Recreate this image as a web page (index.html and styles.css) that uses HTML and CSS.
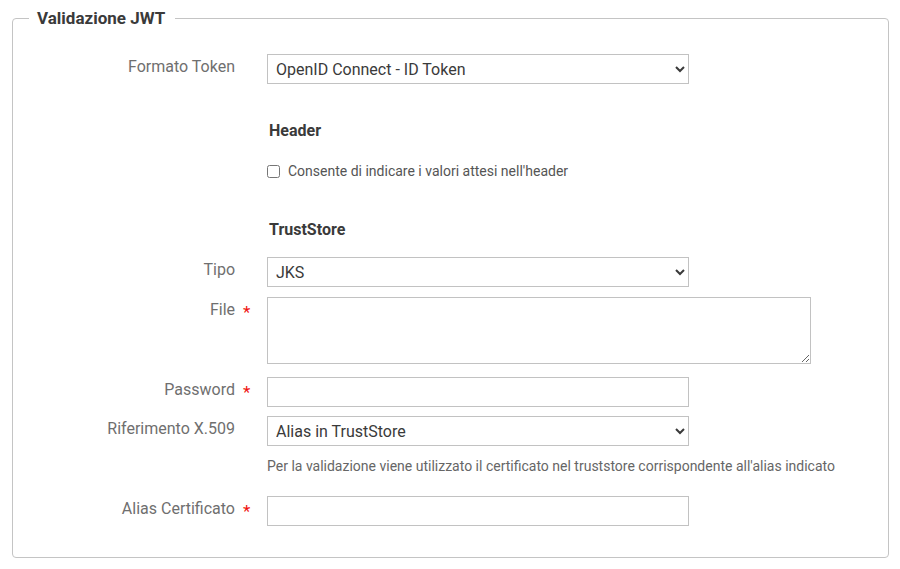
FILE: index.html
```html
<!DOCTYPE html>
<html lang="it">
<head>
<meta charset="utf-8">
<title>Validazione JWT</title>
<link rel="stylesheet" href="styles.css">
</head>
<body>
<fieldset class="box">
  <legend class="box-title">Validazione JWT</legend>

  <div class="row row-first">
    <label class="lbl">Formato Token</label>
    <span class="req"></span>
    <select class="ctl sel"><option>OpenID Connect - ID Token</option></select>
  </div>

  <div class="row row-h1">
    <span class="lbl"></span><span class="req"></span>
    <h3 class="sub">Header</h3>
  </div>

  <div class="row row-chk">
    <span class="lbl"></span><span class="req"></span>
    <label class="chk"><input type="checkbox" class="cb"> Consente di indicare i valori attesi nell'header</label>
  </div>

  <div class="row row-h2">
    <span class="lbl"></span><span class="req"></span>
    <h3 class="sub">TrustStore</h3>
  </div>

  <div class="row row-tipo">
    <label class="lbl">Tipo</label>
    <span class="req"></span>
    <select class="ctl sel"><option>JKS</option></select>
  </div>

  <div class="row row-file">
    <label class="lbl">File</label>
    <span class="req">*</span>
    <textarea class="ctl area"></textarea>
  </div>

  <div class="row row-pwd">
    <label class="lbl">Password</label>
    <span class="req">*</span>
    <input type="text" class="ctl inp">
  </div>

  <div class="row row-rif">
    <label class="lbl">Riferimento X.509</label>
    <span class="req"></span>
    <select class="ctl sel"><option>Alias in TrustStore</option></select>
  </div>

  <div class="row row-help">
    <span class="lbl"></span><span class="req"></span>
    <p class="help">Per la validazione viene utilizzato il certificato nel truststore corrispondente all'alias indicato</p>
  </div>

  <div class="row row-alias">
    <label class="lbl">Alias Certificato</label>
    <span class="req">*</span>
    <input type="text" class="ctl inp">
  </div>
</fieldset>
</body>
</html>
```

FILE: styles.css
```css
html, body {
  margin: 0;
  padding: 0;
  background: #ffffff;
}

body {
  font-family: Roboto, "Liberation Sans", Arial, sans-serif;
  color: #333333;
}

.box {
  margin: 8px 11px 0 12px;
  padding: 0 0 31px 0;
  border: 1px solid #c4c4c4;
  border-radius: 4px;
  min-width: 0;
}

.box-title {
  margin-left: 16px;
  padding: 0 10px 0 8px;
  font-size: 17px;
  font-weight: 700;
  line-height: 20px;
  color: #3a3a3a;
}

.row {
  display: grid;
  grid-template-columns: 222px 32px 1fr;
  align-items: start;
}

.lbl {
  text-align: right;
  font-size: 16px;
  line-height: 20px;
  padding-top: 3px;
  color: #6f6f6f;
}

.req {
  color: #f01010;
  font-size: 17px;
  line-height: 20px;
  padding-top: 5px;
  padding-left: 8px;
}

.ctl {
  box-sizing: border-box;
  border: 1px solid #c2c2c2;
  border-radius: 0;
  background: #ffffff;
  font-family: Roboto, "Liberation Sans", Arial, sans-serif;
  font-size: 16px;
  color: #3a3a3a;
  margin: 0;
}

.sel {
  width: 422px;
  height: 30px;
  padding: 0 4px 0 4px;
}

.inp {
  width: 422px;
  height: 30px;
  padding: 0 8px;
}

.area {
  display: block;
  width: 544px;
  height: 67px;
  padding: 4px 8px;
}

.sub {
  margin: 0;
  padding-left: 2px;
  font-size: 16px;
  font-weight: 700;
  line-height: 20px;
  color: #3a3a3a;
}

.chk {
  display: flex;
  align-items: center;
  gap: 8px;
  font-size: 14px;
  line-height: 20px;
  color: #555555;
}

.cb {
  margin: 0;
  width: 13px;
  height: 13px;
}

.help {
  margin: 0;
  font-size: 14px;
  line-height: 20px;
  color: #666666;
}

.row-first { margin-top: 26px; }
.row-h1 { margin-top: 37px; }
.row-chk { margin-top: 20px; }
.row-h2 { margin-top: 39px; }
.row-tipo { margin-top: 17px; }
.row-file { margin-top: 10px; }
.row-pwd { margin-top: 13px; }
.row-rif { margin-top: 9px; }
.row-help { margin-top: 10px; }
.row-alias { margin-top: 20px; }
```
